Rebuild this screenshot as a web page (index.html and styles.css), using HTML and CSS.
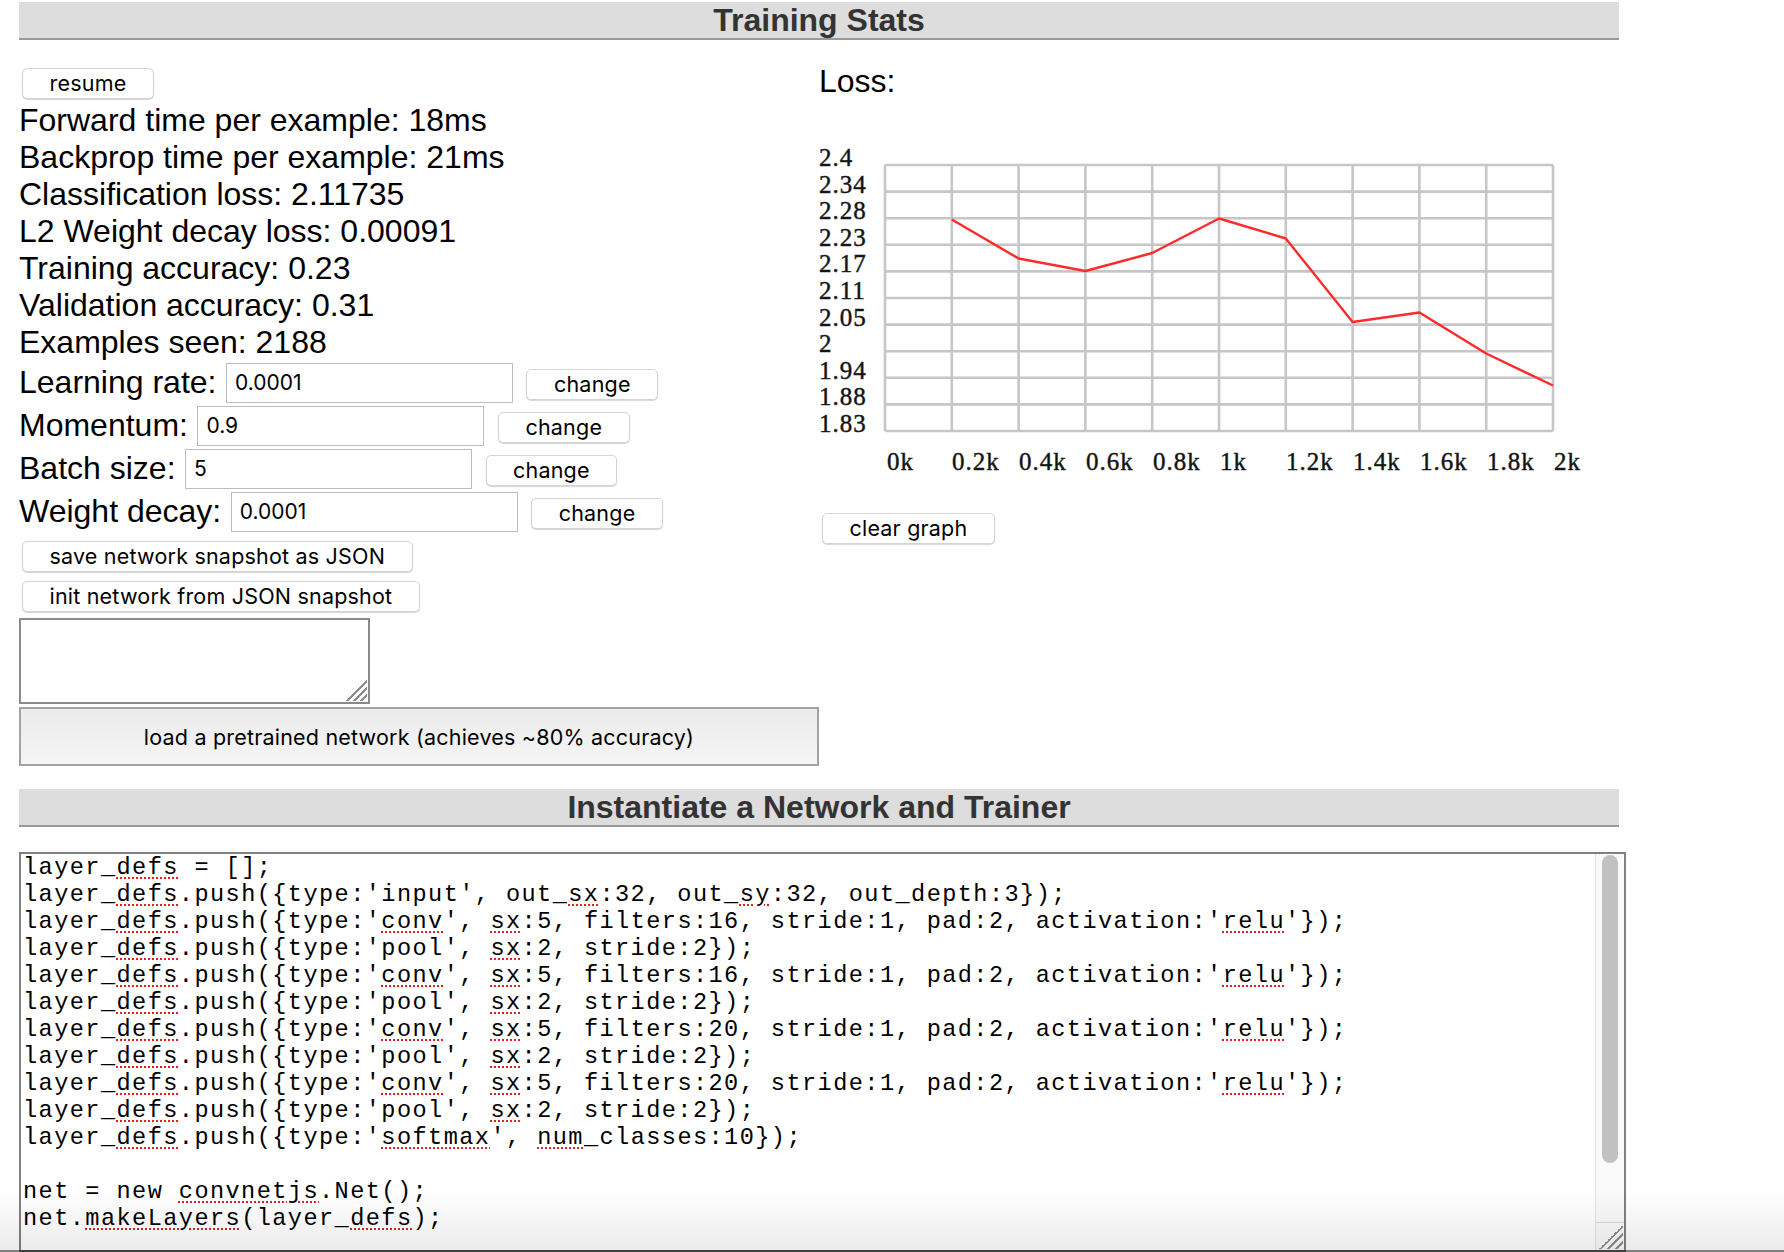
FILE: index.html
```html
<!DOCTYPE html>
<html>
<head>
<meta charset="utf-8">
<title>Training Stats</title>
<link rel="stylesheet" href="styles.css">
</head>
<body>
<div class="page">
  <h2 class="bar">Training Stats</h2>
  <div class="stats">
    <div class="left">
      <button class="btn resume">resume</button>
      <div class="stat">Forward time per example: 18ms</div>
      <div class="stat">Backprop time per example: 21ms</div>
      <div class="stat">Classification loss: 2.11735</div>
      <div class="stat">L2 Weight decay loss: 0.00091</div>
      <div class="stat">Training accuracy: 0.23</div>
      <div class="stat">Validation accuracy: 0.31</div>
      <div class="stat">Examples seen: 2188</div>
      <div class="param"><span>Learning rate:</span><input class="field" value="0.0001"><button class="btn change">change</button></div>
      <div class="param"><span>Momentum:</span><input class="field" value="0.9"><button class="btn change">change</button></div>
      <div class="param"><span>Batch size:</span><input class="field" value="5"><button class="btn change">change</button></div>
      <div class="param"><span>Weight decay:</span><input class="field" value="0.0001"><button class="btn change">change</button></div>
      <button class="btn save">save network snapshot as JSON</button>
      <button class="btn init">init network from JSON snapshot</button>
      <textarea class="snap"></textarea>
      <button class="load">load a pretrained network (achieves ~80% accuracy)</button>
    </div>
    <div class="right">
      <div class="loss">Loss:</div>
      <svg class="graph" width="800" height="400" viewBox="0 0 800 400">
        <g class="grid">
          <line x1="66" y1="65" x2="66" y2="331"/>
          <line x1="132.8" y1="65" x2="132.8" y2="331"/>
          <line x1="199.6" y1="65" x2="199.6" y2="331"/>
          <line x1="266.4" y1="65" x2="266.4" y2="331"/>
          <line x1="333.2" y1="65" x2="333.2" y2="331"/>
          <line x1="400" y1="65" x2="400" y2="331"/>
          <line x1="466.8" y1="65" x2="466.8" y2="331"/>
          <line x1="533.6" y1="65" x2="533.6" y2="331"/>
          <line x1="600.4" y1="65" x2="600.4" y2="331"/>
          <line x1="667.2" y1="65" x2="667.2" y2="331"/>
          <line x1="734" y1="65" x2="734" y2="331"/>
          <line x1="66" y1="65" x2="734" y2="65"/>
          <line x1="66" y1="91.6" x2="734" y2="91.6"/>
          <line x1="66" y1="118.2" x2="734" y2="118.2"/>
          <line x1="66" y1="144.8" x2="734" y2="144.8"/>
          <line x1="66" y1="171.4" x2="734" y2="171.4"/>
          <line x1="66" y1="198" x2="734" y2="198"/>
          <line x1="66" y1="224.6" x2="734" y2="224.6"/>
          <line x1="66" y1="251.2" x2="734" y2="251.2"/>
          <line x1="66" y1="277.8" x2="734" y2="277.8"/>
          <line x1="66" y1="304.4" x2="734" y2="304.4"/>
          <line x1="66" y1="331" x2="734" y2="331"/>
        </g>
        <g class="labels">
          <text x="0" y="66">2.4</text>
          <text x="0" y="93">2.34</text>
          <text x="0" y="119">2.28</text>
          <text x="0" y="146">2.23</text>
          <text x="0" y="172">2.17</text>
          <text x="0" y="199">2.11</text>
          <text x="0" y="226">2.05</text>
          <text x="0" y="252">2</text>
          <text x="0" y="279">1.94</text>
          <text x="0" y="305">1.88</text>
          <text x="0" y="332">1.83</text>
          <text x="68" y="370">0k</text>
          <text x="133" y="370">0.2k</text>
          <text x="200" y="370">0.4k</text>
          <text x="267" y="370">0.6k</text>
          <text x="334" y="370">0.8k</text>
          <text x="401" y="370">1k</text>
          <text x="467" y="370">1.2k</text>
          <text x="534" y="370">1.4k</text>
          <text x="601" y="370">1.6k</text>
          <text x="668" y="370">1.8k</text>
          <text x="735" y="370">2k</text>
        </g>
        <polyline class="series" points="132.8,119.5 199.6,158.5 266.4,171 333.2,153 400,118.5 466.8,138.5 533.6,222 600.4,212.5 667.2,253.5 734,285.5"/>
      </svg>
      <button class="btn clear">clear graph</button>
    </div>
  </div>
  <h2 class="bar bar2">Instantiate a Network and Trainer</h2>
  <div class="codebox">
    <div class="code"><div class="codetext">layer_<span class="sp">defs</span> = [];
layer_<span class="sp">defs</span>.push({type:'input', out_<span class="sp">sx</span>:32, out_<span class="sp">sy</span>:32, out_depth:3});
layer_<span class="sp">defs</span>.push({type:'<span class="sp">conv</span>', <span class="sp">sx</span>:5, filters:16, stride:1, pad:2, activation:'<span class="sp">relu</span>'});
layer_<span class="sp">defs</span>.push({type:'pool', <span class="sp">sx</span>:2, stride:2});
layer_<span class="sp">defs</span>.push({type:'<span class="sp">conv</span>', <span class="sp">sx</span>:5, filters:16, stride:1, pad:2, activation:'<span class="sp">relu</span>'});
layer_<span class="sp">defs</span>.push({type:'pool', <span class="sp">sx</span>:2, stride:2});
layer_<span class="sp">defs</span>.push({type:'<span class="sp">conv</span>', <span class="sp">sx</span>:5, filters:20, stride:1, pad:2, activation:'<span class="sp">relu</span>'});
layer_<span class="sp">defs</span>.push({type:'pool', <span class="sp">sx</span>:2, stride:2});
layer_<span class="sp">defs</span>.push({type:'<span class="sp">conv</span>', <span class="sp">sx</span>:5, filters:20, stride:1, pad:2, activation:'<span class="sp">relu</span>'});
layer_<span class="sp">defs</span>.push({type:'pool', <span class="sp">sx</span>:2, stride:2});
layer_<span class="sp">defs</span>.push({type:'<span class="sp">softmax</span>', <span class="sp">num</span>_classes:10});

net = new <span class="sp">convnetjs</span>.Net();
net.<span class="sp">makeLayers</span>(layer_<span class="sp">defs</span>);
</div></div>
    <div class="vscroll">
      <div class="thumb"></div>
      <div class="corner"></div>
    </div>
  </div>
</div>
<div class="fade"></div>
</body>
</html>
```

FILE: styles.css
```css
* {
  box-sizing: border-box;
}

html, body {
  margin: 0;
  background: #fff;
}

body {
  font-family: "Liberation Sans", Arial, Helvetica, sans-serif;
  font-size: 32px;
  color: #000;
}

.page {
  width: 1607px;
  margin-left: 19px;
  padding-top: 2px;
}

.bar {
  width: 1600px;
  height: 38px;
  margin: 0;
  line-height: 36px;
  background: #ddd;
  border-bottom: 2px solid #999;
  text-align: center;
  font-size: 32px;
  font-weight: bold;
  color: #333;
}

.bar2 {
  margin-top: 23px;
}

.stats {
  display: flex;
  width: 1600px;
}

.left {
  width: 800px;
  padding-top: 28px;
}

.right {
  width: 800px;
  padding-top: 23px;
}

.btn {
  display: block;
  height: 31px;
  margin: 0 0 0 3px;
  padding: 0 26.5px;
  font-family: Inter, "Liberation Sans", sans-serif;
  font-size: 21.5px;
  letter-spacing: 0.2px;
  line-height: 29px;
  color: #000;
  background: #fff;
  border: 1px solid #d4d4d4;
  border-radius: 5px;
  box-shadow: 0 1px 1px rgba(0, 0, 0, 0.16);
}

.resume {
  margin-bottom: 3px;
}

.stat {
  line-height: 37px;
  white-space: nowrap;
}

.param {
  display: flex;
  align-items: center;
  height: 43px;
  white-space: nowrap;
}

.field {
  width: 287px;
  height: 40px;
  margin: 0 0 0 9.5px;
  padding: 0 8px;
  font-family: Inter, "Liberation Sans", sans-serif;
  font-size: 21px;
  color: #000;
  background: #fff;
  border: 1px solid #bdbdbd;
  border-radius: 0;
  outline: none;
}

.change {
  display: inline-block;
  margin: 4px 0 0 13.5px;
}

.save {
  margin-top: 8px;
}

.init {
  margin-top: 9px;
}

.snap {
  display: block;
  width: 351px;
  height: 86px;
  margin: 6px 0 0 0;
  padding: 2px;
  border: 2px solid #8a8a8a;
  background-color: #fff;
  background-image: linear-gradient(135deg, transparent 0 52%, #8c8c8c 52% 58%, transparent 58% 68%, #8c8c8c 68% 74%, transparent 74% 84%, #8c8c8c 84% 90%, transparent 90%);
  background-repeat: no-repeat;
  background-size: 22px 22px;
  background-position: right 1px bottom 1px;
  resize: none;
}

.load {
  display: block;
  width: 800px;
  height: 59px;
  margin: 3px 0 0 0;
  padding: 0;
  font-family: Inter, "Liberation Sans", sans-serif;
  font-size: 21.5px;
  letter-spacing: 0.2px;
  color: #000;
  background: linear-gradient(to bottom, #ebebeb, #f5f5f5);
  border: 2px solid #a3a3a3;
  border-radius: 0;
}

.loss {
  line-height: 37px;
}

.graph {
  display: block;
}

.grid line {
  stroke: #c6c6c6;
  stroke-width: 2.6;
}

.labels text {
  font-family: "Liberation Serif", "Times New Roman", serif;
  font-size: 25px;
  letter-spacing: 1px;
  fill: #111;
  stroke: #222;
  stroke-width: 0.45;
}

.series {
  fill: none;
  stroke: #ff2a2a;
  stroke-width: 2.4;
  stroke-linejoin: round;
}

.clear {
  margin-top: 13px;
}

.codebox {
  position: relative;
  width: 1607px;
  height: 400px;
  margin-top: 25px;
}

.code {
  height: 400px;
  padding: 0 33px 0 2px;
  border: 2px solid #808080;
  overflow: hidden;
}

.codetext {
  font-family: "Liberation Mono", "Courier New", monospace;
  font-size: 23.6px;
  letter-spacing: 1.42px;
  line-height: 27px;
  color: #000;
  white-space: pre;
}

.vscroll {
  position: absolute;
  top: 2px;
  right: 2px;
  bottom: 2px;
  width: 29px;
  display: flex;
  flex-direction: column;
  background: #fafafa;
  border-left: 1px solid #e4e4e4;
}

.thumb {
  height: 308px;
  margin: 1px 6px 0 6px;
  background: #c1c1c1;
  border-radius: 8px;
}

.corner {
  height: 28px;
  margin-top: auto;
  border-top: 1px solid #dcdcdc;
  background-image: linear-gradient(135deg, transparent 0 50%, #8c8c8c 50% 56%, transparent 56% 66%, #8c8c8c 66% 72%, transparent 72% 82%, #8c8c8c 82% 88%, transparent 88%);
  background-repeat: no-repeat;
  background-size: 24px 24px;
  background-position: right 1px bottom 1px;
}

.sp {
  text-decoration-line: underline;
  text-decoration-style: dotted;
  text-decoration-color: #e02020;
  text-decoration-thickness: 2px;
  text-underline-offset: 3px;
}

.fade {
  position: fixed;
  left: 0;
  right: 0;
  bottom: 0;
  height: 62px;
  background: linear-gradient(to bottom, #ffffff, #ebebeb);
  mix-blend-mode: multiply;
  border-bottom: 2px solid #808080;
  pointer-events: none;
}
```
